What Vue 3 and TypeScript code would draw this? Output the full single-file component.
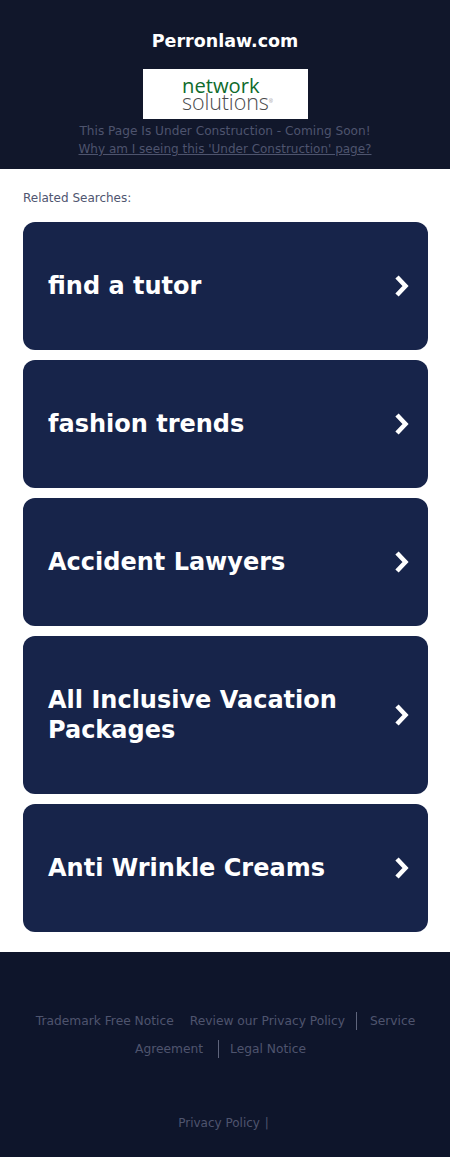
<script setup lang="ts">
const searches: string[] = [
  'find a tutor',
  'fashion trends',
  'Accident Lawyers',
  'All Inclusive Vacation Packages',
  'Anti Wrinkle Creams',
]
</script>

<template>
  <div class="page">
    <header class="top">
      <h1 class="domain">Perronlaw.com</h1>
      <div class="logo">
        <div class="logo-inner">
          <span class="net">network</span>
          <span class="sol">solutions<sup>®</sup></span>
        </div>
      </div>
      <p class="notice">This Page Is Under Construction - Coming Soon!</p>
      <a class="why" href="#">Why am I seeing this 'Under Construction' page?</a>
    </header>
    <main class="content">
      <div class="related">Related Searches:</div>
      <div class="cards">
        <a v-for="s in searches" :key="s" class="card" href="#">
          <span class="label">{{ s }}</span>
          <svg class="chev" width="16" height="24" viewBox="0 0 16 24" aria-hidden="true">
            <path d="M3 3 L11.5 12 L3 21" fill="none" stroke="#fff" stroke-width="4.5" />
          </svg>
        </a>
      </div>
    </main>
    <footer class="bottom">
      <div class="links">
        <a href="#" class="lnk">Trademark Free Notice</a>
        <a href="#" class="lnk sep">Review our Privacy Policy</a>
        <a href="#" class="lnk sep2">Service Agreement</a>
        <a href="#" class="lnk last">Legal Notice</a>
      </div>
      <div class="policy">Privacy Policy <span class="bar">|</span></div>
    </footer>
  </div>
</template>

<style>
html, body { margin: 0; background: #fff; }
</style>

<style scoped>
.page {
  width: 450px;
  font-family: "DejaVu Sans", sans-serif;
}
.top {
  background: #11172b;
  height: 169px;
  box-sizing: border-box;
  padding-top: 30px;
  text-align: center;
}
.domain {
  margin: 0;
  color: #fff;
  font-size: 17.5px;
  line-height: 21px;
  font-weight: 700;
  position: relative;
  top: 1px;
}
.logo {
  width: 165px;
  height: 50px;
  margin: 18px auto 0;
  background: #fff;
  display: flex;
  align-items: center;
  justify-content: center;
}
.logo-inner {
  display: flex;
  flex-direction: column;
  align-items: flex-start;
  font-family: "Open Sans", sans-serif;
  font-weight: 300;
  width: 90px;
  margin: 0 0 2px 4px;
}
.net {
  color: #0f6b2c;
  font-size: 20.2px;
  line-height: 16px;
  font-weight: 400;
}
.sol {
  color: #4a4a4c;
  font-size: 21.5px;
  line-height: 17px;
  letter-spacing: -0.1px;
}
.sol sup {
  font-size: 5px;
  line-height: 0;
  vertical-align: 7px;
}
.notice {
  margin: 3px 0 0;
  font-size: 12.15px;
  line-height: 18px;
  color: #4e546e;
}
.why {
  display: block;
  font-size: 12px;
  line-height: 18px;
  color: #4e546e;
  text-decoration: underline;
}
.content {
  background: #fff;
  padding: 21px 22px 20px 23px;
}
.related {
  font-size: 12px;
  line-height: 17px;
  color: #4f5570;
  margin-bottom: 15px;
}
.cards {
  display: flex;
  flex-direction: column;
  gap: 10px;
}
.card {
  display: flex;
  align-items: center;
  justify-content: space-between;
  box-sizing: border-box;
  min-height: 128px;
  padding: 49px 18px 49px 25px;
  background: #17244a;
  border-radius: 12px;
  color: #fff;
  text-decoration: none;
}
.label {
  font-size: 24px;
  line-height: 30px;
  font-weight: 700;
  max-width: 320px;
}
.chev { flex: none; }
.bottom {
  background: #0e152b;
  height: 205px;
  box-sizing: border-box;
  padding-top: 55px;
  text-align: center;
}
.links {
  font-size: 12.25px;
  line-height: 28px;
  padding: 0 20px 0 21px;
}
.lnk {
  color: #4e546e;
  text-decoration: none;
}
.sep {
  margin-left: 16px;
  padding: 2px 11px 2px 0;
  border-right: 1px solid #5f657c;
}
.sep2 {
  margin-left: 13px;
  margin-right: 11px;
  padding: 2px 15px 2px 0;
  border-right: 1px solid #5f657c;
}
.last { padding-right: 10px; }
.policy {
  margin-top: 51px;
  font-size: 12px;
  line-height: 18px;
  color: #4e546e;
}
.bar { margin: 0 3px 0 1px; }
</style>
